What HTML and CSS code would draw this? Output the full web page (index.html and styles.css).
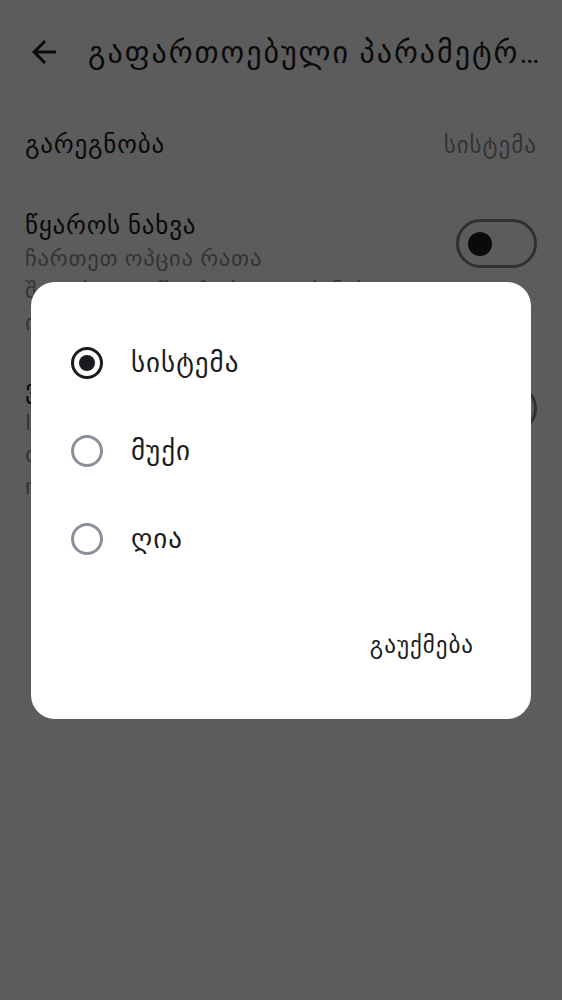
FILE: index.html
```html
<!DOCTYPE html>
<html lang="ka">
<head>
<meta charset="utf-8">
<title>გაფართოებული პარამეტრები</title>
<link rel="stylesheet" href="styles.css">
</head>
<body>
<div class="page">
  <header class="topbar">
    <svg class="back" viewBox="0 0 24 24" width="36" height="36"><path d="M20 11H7.83l5.59-5.59L12 4l-8 8 8 8 1.41-1.41L7.83 13H20v-2z"/></svg>
    <h1 class="title">გაფართოებული პარამეტრები</h1>
  </header>
  <div class="row row-simple">
    <span class="row-title">გარეგნობა</span>
    <span class="row-value">სისტემა</span>
  </div>
  <div class="row row-switch">
    <div class="row-text">
      <div class="row-title">წყაროს ნახვა</div>
      <div class="row-sub">ჩართეთ ოპცია რათა<br>შეგეძლოთ წყაროს კოდის ნახვა<br>ინსპექტორში</div>
    </div>
    <span class="switch"><span class="thumb"></span></span>
  </div>
  <div class="row row-switch row-third">
    <div class="row-text">
      <div class="row-title">ვებ ხედის გამართვა</div>
      <div class="row-sub">Inspect web views using<br>chrome developer tools<br>mode</div>
    </div>
    <span class="switch"><span class="thumb"></span></span>
  </div>
</div>
<div class="scrim">
  <div class="dialog">
    <ul class="options">
      <li class="option"><span class="radio checked"></span><span class="opt-label">სისტემა</span></li>
      <li class="option"><span class="radio"></span><span class="opt-label">მუქი</span></li>
      <li class="option"><span class="radio"></span><span class="opt-label">ღია</span></li>
    </ul>
    <div class="actions">
      <button class="btn">გაუქმება</button>
    </div>
  </div>
</div>
</body>
</html>
```
FILE: styles.css
```css
* { box-sizing: border-box; }
html, body { margin: 0; padding: 0; }
body {
  width: 562px;
  height: 1000px;
  background: #ffffff;
  font-family: Roboto, "Noto Sans", "DejaVu Sans", sans-serif;
  color: #1a1c1e;
  overflow: hidden;
}
.page { width: 562px; }
.topbar {
  height: 104px;
  display: flex;
  align-items: center;
  padding-left: 26px;
  padding-right: 14px;
}
.back { fill: #1a1c1e; flex: none; }
.title {
  margin: 0 0 0 26px;
  font-size: 30px;
  letter-spacing: 2px;
  font-weight: normal;
  white-space: nowrap;
  overflow: hidden;
  text-overflow: ellipsis;
  min-width: 0;
}
.row {
  display: flex;
  align-items: center;
  padding: 0 25px;
}
.row-simple { height: 82px; justify-content: space-between; }
.row-title { font-size: 25px; letter-spacing: 0.8px; line-height: 32px; }
.row-value { font-size: 23px; letter-spacing: 1px; color: #8c9099; }
.row-switch { align-items: flex-start; padding-top: 24px; }
.row-text { flex: 1; min-width: 0; padding-right: 20px; white-space: nowrap; overflow: hidden; }
.row-sub { font-size: 22.5px; letter-spacing: 0.8px; line-height: 32px; color: #8c9099; }
.switch {
  flex: none;
  width: 81px;
  height: 49px;
  border: 3px solid #7f858e;
  border-radius: 25px;
  display: flex;
  align-items: center;
  padding-left: 9px;
  margin-top: 9px;
}
.thumb { width: 24px; height: 24px; border-radius: 50%; background: #1a1c1e; }
.row-third { padding-top: 36px; }
.row-third .switch { margin-top: 10px; }
.scrim {
  position: fixed;
  inset: 0;
  background: rgba(0, 0, 0, 0.64);
  display: flex;
  align-items: center;
  justify-content: center;
  padding: 0 31px;
}
.dialog {
  width: 100%;
  height: 437px;
  background: #ffffff;
  border-radius: 24px;
  padding-top: 37px;
  display: flex;
  flex-direction: column;
}
.options { list-style: none; margin: 0; padding: 0; }
.option {
  height: 88px;
  display: flex;
  align-items: center;
  padding-left: 40px;
}
.radio {
  width: 32px;
  height: 32px;
  border: 3px solid #8b919a;
  border-radius: 50%;
  display: flex;
  align-items: center;
  justify-content: center;
  flex: none;
}
.radio.checked { border-color: #1b1b1f; }
.radio.checked::after {
  content: "";
  width: 16px;
  height: 16px;
  border-radius: 50%;
  background: #1b1b1f;
}
.opt-label { margin-left: 28px; font-size: 27px; letter-spacing: 1px; color: #1a1c1e; }
.actions {
  display: flex;
  justify-content: flex-end;
  margin-top: 33px;
  padding-right: 39px;
}
.btn {
  font-family: Roboto, "Noto Sans", "DejaVu Sans", sans-serif;
  font-size: 23px;
  letter-spacing: 1px;
  color: #1a1c1e;
  background: none;
  border: 0;
  height: 60px;
  padding: 0 18px;
}
```
